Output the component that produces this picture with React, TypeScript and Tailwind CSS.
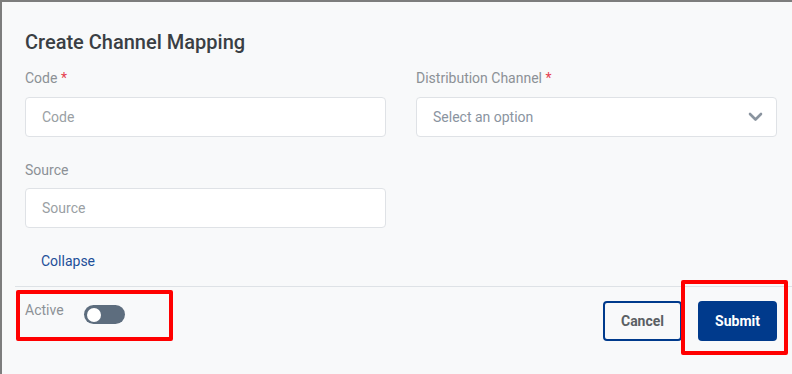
import { useState } from "react";

export default function App() {
  const [form, setForm] = useState({ code: "", channel: "", source: "" });
  const [active, setActive] = useState(false);

  return (
    <div
      className="relative w-[792px] h-[374px] overflow-hidden bg-[#f8f9fa] border-t-2 border-l-2 border-[#7d7d7d]"
      style={{ fontFamily: "Roboto, 'Liberation Sans', sans-serif" }}
    >
      <div className="pl-[23px] pr-[15px] pt-[26px]">
        <h2 className="text-[20px] leading-[28px] font-medium text-[#3a3f44]">
          Create Channel Mapping
        </h2>

        <div className="mt-[12px] grid grid-cols-[361px_361px] gap-x-[30px]">
          <div>
            <label className="block text-[14px] leading-[20px] text-[#8c9196]">
              Code <span className="text-[#e5414f]">*</span>
            </label>
            <input
              placeholder="Code"
              value={form.code}
              onChange={(e) => setForm({ ...form, code: e.target.value })}
              className="mt-[9px] w-full h-[40px] bg-white border border-[#dfe2e6] rounded-[4px] pl-[16px] text-[14px] text-[#3a3f44] placeholder:text-[#9a9fa4] outline-none"
            />
          </div>

          <div>
            <label className="block text-[14px] leading-[20px] text-[#8c9196]">
              Distribution Channel <span className="text-[#e5414f]">*</span>
            </label>
            <div className="mt-[9px] w-full h-[40px] bg-white border border-[#dfe2e6] rounded-[4px] pl-[16px] pr-[13px] flex items-center justify-between">
              <span className="text-[14px] text-[#8a949f]">Select an option</span>
              <svg width="15" height="10" viewBox="0 0 15 10" fill="none">
                <polyline
                  points="2,2 7.5,7.5 13,2"
                  stroke="#8a949f"
                  strokeWidth="2.6"
                  strokeLinecap="round"
                  strokeLinejoin="round"
                />
              </svg>
            </div>
          </div>

          <div className="mt-[23px]">
            <label className="block text-[14px] leading-[20px] text-[#8c9196]">
              Source
            </label>
            <input
              placeholder="Source"
              value={form.source}
              onChange={(e) => setForm({ ...form, source: e.target.value })}
              className="mt-[8px] w-full h-[40px] bg-white border border-[#dfe2e6] rounded-[4px] pl-[16px] text-[14px] text-[#3a3f44] placeholder:text-[#9a9fa4] outline-none"
            />
          </div>
        </div>

        <button className="mt-[23px] ml-[16px] text-[14px] leading-[20px] text-[#1d4f99]">
          Collapse
        </button>
      </div>

      <div className="mt-[13px] ml-[13px] border-t border-[#dee2e6]" />

      <div className="pl-[23px] pr-[15px] pt-[14px] flex justify-between">
        <div className="flex items-start">
          <span className="text-[14px] leading-[20px] text-[#8c9196] -mt-[1px]">Active</span>
          <button
            onClick={() => setActive(!active)}
            className="ml-[20px] mt-[4px] w-[41px] h-[19px] rounded-full bg-[#5d6d7e] flex items-center px-[3px]"
          >
            <span className="block w-[14px] h-[14px] rounded-full bg-white" />
          </button>
        </div>

        <div className="flex gap-[16px]">
          <button className="w-[79px] h-[40px] rounded-[4px] border-2 border-[#003a8c] text-[14px] font-bold text-[#5a5f64] bg-transparent">
            Cancel
          </button>
          <button className="w-[79px] h-[40px] rounded-[4px] bg-[#003a8c] text-[14px] font-bold text-white">
            Submit
          </button>
        </div>
      </div>

      {/* annotation boxes */}
      <div className="absolute left-[14px] top-[288px] w-[157px] h-[51px] border-[4px] border-[#ff0000] rounded-[2px] pointer-events-none" />
      <div className="absolute left-[679px] top-[278px] w-[107px] h-[75px] border-[4px] border-[#ff0000] rounded-[2px] pointer-events-none" />
    </div>
  );
}
